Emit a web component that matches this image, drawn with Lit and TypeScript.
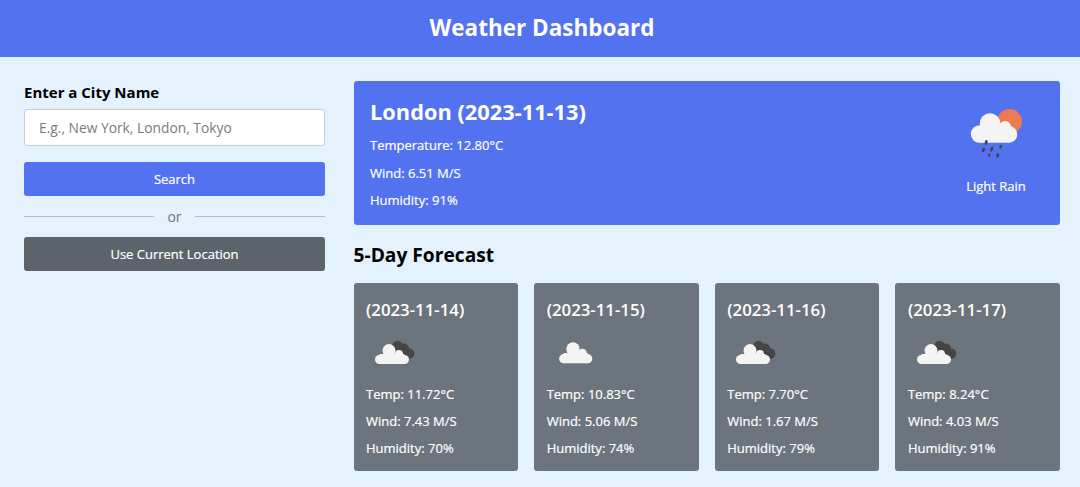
import { LitElement, html, css, svg } from "lit";
import { customElement } from "lit/decorators.js";

const forecast = [
  { date: "2023-11-14", temp: "11.72", wind: "7.43", hum: "70", dark: true },
  { date: "2023-11-15", temp: "10.83", wind: "5.06", hum: "74", dark: false },
  { date: "2023-11-16", temp: "7.70", wind: "1.67", hum: "79", dark: true },
  { date: "2023-11-17", temp: "8.24", wind: "4.03", hum: "91", dark: true },
];

const darkCloud = svg`
  <g fill="#454545">
    <circle cx="30.500" cy="16" r="5.300"/>
    <circle cx="37" cy="18.500" r="5"/>
    <circle cx="42" cy="23.500" r="5.300"/>
    <rect x="30" y="16" width="10" height="12"/>
  </g>
  <g fill="#f4f4f4">
    <circle cx="22" cy="20.500" r="6.500"/>
    <circle cx="12.500" cy="29.500" r="4.500"/>
    <circle cx="32" cy="24" r="4"/>
    <circle cx="37.500" cy="29.500" r="4.500"/>
    <rect x="12.500" y="24" width="25" height="10"/>
  </g>`;

const lightCloud = svg`
  <g fill="#f4f4f4">
    <circle cx="25" cy="19" r="6.700"/>
    <circle cx="15.700" cy="28.700" r="4.600"/>
    <circle cx="34.500" cy="23" r="4.300"/>
    <circle cx="39.700" cy="28.700" r="4.600"/>
    <rect x="15.700" y="23" width="24" height="10.300"/>
  </g>`;

const smallIcon = (dark: boolean) =>
  html`<svg class="ficon" width="70" height="40" viewBox="0 0 70 40">${dark ? darkCloud : lightCloud}</svg>`;

@customElement("app-root")
export class AppRoot extends LitElement {
  static styles = css`
    :host {
      display: block;
      min-height: 487px;
      background: #e3f2fd;
      font-family: "Open Sans", sans-serif;
      color: #000;
      overflow: hidden;
    }
    * { box-sizing: border-box; }
    h1, h2, h3, h4, p { margin: 0; }
    header {
      height: 57px;
      background: #5372f0;
      color: #fff;
      display: flex;
      align-items: center;
      justify-content: center;
      padding-left: 4px;
    }
    h1 { font-size: 22.5px; font-weight: 700; line-height: 1; }
    .layout {
      display: grid;
      grid-template-columns: 301px 706.5px;
      column-gap: 28.5px;
      padding: 24px 20px 0 24px;
    }
    .side { display: flex; flex-direction: column; }
    .label { font-size: 15px; font-weight: 700; line-height: 20px; margin: 1px 0 7px; }
    input {
      width: 100%;
      height: 37px;
      padding: 0 14px;
      border: 1px solid #ccc;
      border-radius: 3px;
      background: #fff;
      font: 400 13.8px "Open Sans", sans-serif;
      outline: none;
    }
    input::placeholder { color: #7b7b7b; opacity: 1; }
    .btn {
      display: flex;
      align-items: center;
      justify-content: center;
      height: 34px;
      border: none;
      border-radius: 3px;
      color: #fff;
      font: 400 13px "Open Sans", sans-serif;
      width: 100%;
      -webkit-text-stroke: 0.2px #fff;
    }
    .search { background: #5372f0; margin-top: 16px; }
    .current { background: #5c636a; }
    .or {
      display: flex;
      align-items: center;
      gap: 13px;
      height: 41px;
      color: #6c757d;
      font-size: 14px;
    }
    .or i { flex: 1; height: 1px; background: #bbb; }
    .main { display: flex; flex-direction: column; }
    .current-card {
      height: 144px;
      background: #5372f0;
      color: #fff;
      border-radius: 3px;
      padding: 15px 16.5px;
      display: flex;
      justify-content: space-between;
    }
    .current-card h2 { font-size: 21.8px; font-weight: 700; line-height: 32px; margin-bottom: 8px; }
    .line { font-size: 13px; font-weight: 400; line-height: 18px; margin-bottom: 9.5px; -webkit-text-stroke: 0.2px #fff; }
    .cond {
      width: 96px;
      margin-right: -0.5px;
      display: flex;
      flex-direction: column;
      align-items: center;
      font-size: 13px;
      -webkit-text-stroke: 0.2px #fff;
    }
    .cond svg { display: block; margin-top: 4px; }
    .cond span { margin-top: 17px; line-height: 18px; }
    h3 { font-size: 19.2px; font-weight: 700; line-height: 26px; margin: 17px 0 15px; }
    .grid { display: grid; grid-template-columns: repeat(4, 1fr); gap: 16px; }
    .day {
      height: 188px;
      background: #6c757d;
      color: #fff;
      border-radius: 3px;
      padding: 15px 12.5px;
    }
    .day h4 { font-size: 16.8px; font-weight: 600; line-height: 24px; }
    .ficon { display: block; margin: 8px 0 15px 1px; }
    .day .line { margin-bottom: 9px; }
  `;

  render() {
    return html`
      <header><h1>Weather Dashboard</h1></header>
      <div class="layout">
        <aside class="side">
          <div class="label">Enter a City Name</div>
          <input placeholder="E.g., New York, London, Tokyo" />
          <button class="btn search">Search</button>
          <div class="or"><i></i><span>or</span><i></i></div>
          <button class="btn current">Use Current Location</button>
        </aside>
        <main class="main">
          <section class="current-card">
            <div>
              <h2>London (2023-11-13)</h2>
              <p class="line">Temperature: 12.80°C</p>
              <p class="line">Wind: 6.51 M/S</p>
              <p class="line">Humidity: 91%</p>
            </div>
            <div class="cond">
              <svg width="96" height="60" viewBox="0 0 96 60">
                <circle cx="61.500" cy="21.500" r="12.500" fill="#ee7a4f"/>
                <g fill="#f4f4f4">
                  <circle cx="42" cy="23.500" r="10.200"/>
                  <circle cx="31.500" cy="34" r="8.700"/>
                  <circle cx="57" cy="27" r="6"/>
                  <circle cx="61" cy="34.400" r="8.300"/>
                  <rect x="31.500" y="27" width="29.500" height="15.700"/>
                </g>
                <g stroke="#444" stroke-width="2.600" stroke-linecap="round" fill="none">
                  <path d="M38.400 41.200 l-.5 2.200"/>
                  <path d="M35.800 49 l-.8 2"/>
                  <path d="M44.100 48 l-.7 2.200"/>
                  <path d="M52.800 46.200 l-.2 1"/>
                  <path d="M41.400 54.900 l-.2 .6"/>
                  <path d="M49.900 54.600 l-.5 1.500"/>
                </g>
              </svg>
              <span>Light Rain</span>
            </div>
          </section>
          <h3>5-Day Forecast</h3>
          <div class="grid">
            ${forecast.map(
              (d) => html`<article class="day">
                <h4>(${d.date})</h4>
                ${smallIcon(d.dark)}
                <p class="line">Temp: ${d.temp}°C</p>
                <p class="line">Wind: ${d.wind} M/S</p>
                <p class="line">Humidity: ${d.hum}%</p>
              </article>`
            )}
          </div>
        </main>
      </div>
    `;
  }
}
